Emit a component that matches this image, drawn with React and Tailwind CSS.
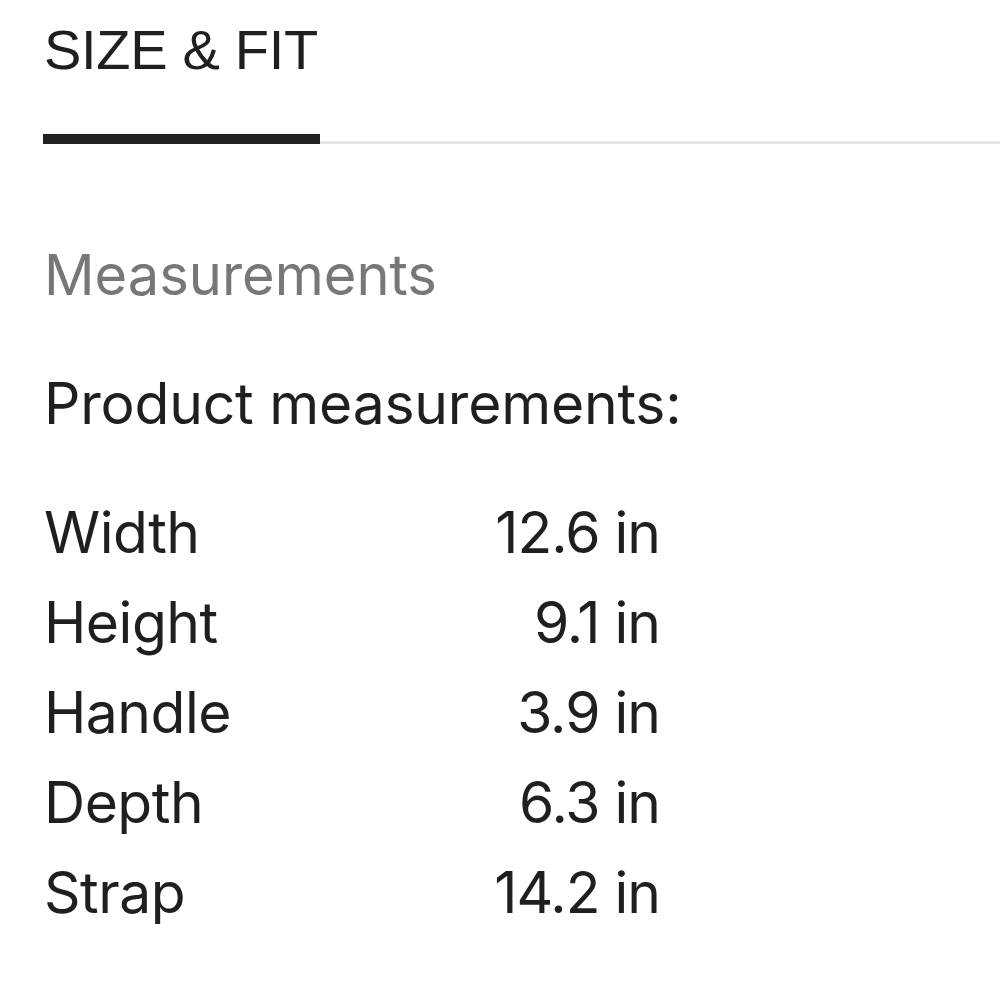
import React from "react";

const rows = [
  ["Width", "12.6 in"],
  ["Height", "9.1 in"],
  ["Handle", "3.9 in"],
  ["Depth", "6.3 in"],
  ["Strap", "14.2 in"],
];

export default function App() {
  return (
    <div className="w-[1000px] h-[1000px] bg-white text-[#1f1f1f] overflow-hidden font-['Inter',sans-serif]">
      <div className="pl-[44px] pt-[14px]">
        <h1 className="text-[56px] leading-[72px] font-['Liberation_Sans',sans-serif] tracking-[-0.3px]">
          SIZE &amp; FIT
        </h1>
      </div>
      <div className="flex items-end mt-[48px] pl-[43px]">
        <div className="w-[277px] h-[10px] bg-[#222]"></div>
        <div className="flex-1 h-[3px] bg-[#e6e6e6]"></div>
      </div>
      <div className="pl-[44px]">
        <h2 className="mt-[99px] text-[56px] leading-[64px] text-[#777] tracking-[0px]">
          Measurements
        </h2>
        <p className="mt-[65px] text-[57px] leading-[64px] tracking-[-0.2px]">
          Product measurements:
        </p>
        <div className="mt-[52px] w-[616px] flex flex-col">
          {rows.map(([label, value]) => (
            <div
              key={label}
              className="flex justify-between items-center h-[90px] text-[57px]"
            >
              <span className="tracking-[-0.5px]">{label}</span>
              <span className="tracking-[-1px]">{value}</span>
            </div>
          ))}
        </div>
      </div>
    </div>
  );
}
